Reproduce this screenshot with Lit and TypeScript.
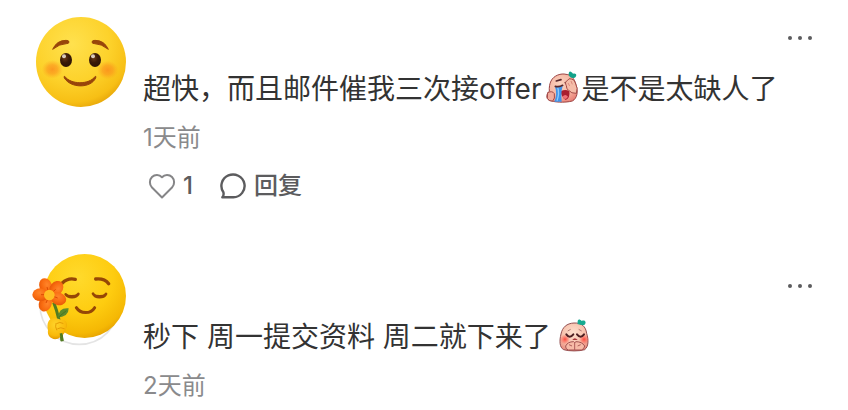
import { LitElement, html, svg, css, nothing } from "lit";
import { customElement, property } from "lit/decorators.js";

const smileAvatar = svg`
  <defs>
    <radialGradient id="face" cx="0.4" cy="0.3" r="0.76">
      <stop offset="0" stop-color="#ffe14e"/><stop offset="0.55" stop-color="#fdd22b"/>
      <stop offset="0.85" stop-color="#f7bf15"/><stop offset="1" stop-color="#e3a006"/>
    </radialGradient>
    <radialGradient id="blush">
      <stop offset="0" stop-color="#fb8a1c" stop-opacity="0.8"/>
      <stop offset="0.5" stop-color="#fb931c" stop-opacity="0.6"/>
      <stop offset="1" stop-color="#fba41c" stop-opacity="0"/>
    </radialGradient>
    <radialGradient id="eye" cx="0.4" cy="0.35" r="0.7">
      <stop offset="0" stop-color="#6b3a16"/><stop offset="0.5" stop-color="#3a1a08"/><stop offset="1" stop-color="#2c1204"/>
    </radialGradient>
  </defs>
  <circle cx="168" cy="171" r="135" fill="url(#face)"/>
  <ellipse cx="82" cy="193" rx="32" ry="28" fill="url(#blush)"/>
  <ellipse cx="248" cy="195" rx="32" ry="28" fill="url(#blush)"/>
  <g fill="#98450a" stroke="#98450a" stroke-width="3" stroke-linejoin="round">
    <path d="M83 133Q95 106 123 106Q132 106 132 111Q132 116 124 116Q104 116 83 133Z"/>
    <path d="M250 133Q238 106 210 106Q201 106 201 111Q201 116 209 116Q229 116 250 133Z"/>
    <path d="M119 214C137 239 192 240 211 214Q214 213 212 219C197 251 137 250 118 219Q116 213 119 214Z"/>
  </g>
  <ellipse cx="123" cy="165" rx="18" ry="21" fill="url(#eye)"/>
  <ellipse cx="210" cy="165" rx="18" ry="21" fill="url(#eye)"/>
  <circle cx="117" cy="154" r="6" fill="#d9cabd"/>
  <circle cx="204" cy="154" r="6" fill="#d9cabd"/>`;

const petals = [
  { x: 62, y: 123, turn: 68 },
  { x: 94, y: 130, turn: 130 },
  { x: 100, y: 161, turn: 18 },
  { x: 61, y: 176, turn: 115 },
  { x: 46, y: 149, turn: 0 },
];

const flowerAvatar = svg`
  <defs>
    <radialGradient id="face" cx="0.42" cy="0.28" r="0.78">
      <stop offset="0" stop-color="#ffda2c"/><stop offset="0.55" stop-color="#fecc10"/>
      <stop offset="0.85" stop-color="#f5b804"/><stop offset="1" stop-color="#df9900"/>
    </radialGradient>
    <radialGradient id="petal" cx="0.45" cy="0.35" r="0.65">
      <stop offset="0" stop-color="#ff852a"/><stop offset="0.6" stop-color="#f96c11"/><stop offset="1" stop-color="#e85a08"/>
    </radialGradient>
    <radialGradient id="hand" cx="0.4" cy="0.3" r="0.75">
      <stop offset="0" stop-color="#ffd32a"/><stop offset="0.7" stop-color="#f9b90a"/><stop offset="1" stop-color="#dc9000"/>
    </radialGradient>
  </defs>
  <circle cx="163" cy="180" r="118" fill="#fff" stroke="#e4e4e4" stroke-width="5"/>
  <ellipse cx="179" cy="153" rx="124" ry="126" fill="url(#face)"/>
  <g fill="none" stroke="#964706" stroke-linecap="round">
    <path d="M112 114Q128 98 151 103" stroke-width="10"/>
    <path d="M212 102Q238 99 251 116" stroke-width="10"/>
    <path d="M122 148C130 160 153 159 160 147" stroke-width="8"/>
    <path d="M204 146C211 160 235 160 243 147" stroke-width="8"/>
    <path d="M154 188C166 207 197 208 209 188" stroke-width="9"/>
  </g>
  <path d="M122 148Q141 153 160 147Q154 158 141 158Q128 158 122 148ZM204 146Q223 153 243 147Q236 158 223 158Q210 158 204 146Z" fill="#964706"/>
  <path d="M86 172Q105 218 111 288" fill="none" stroke="#517b22" stroke-width="9"/>
  <path d="M99 218Q101 187 131 190Q131 215 99 218Z" fill="#5e8b2c"/>
  <path d="M101 216Q113 206 124 197" fill="none" stroke="#3f681c" stroke-width="2"/>
  ${petals.map(({ x, y, turn }) => svg`<ellipse cx=${x} cy=${y} rx="24" ry="19" transform="rotate(${turn} ${x} ${y})" fill="url(#petal)"/>`)}
  <path d="M66 126L70 140M92 133L81 143M98 159L85 154M63 174L69 160M48 149L60 149" fill="none" stroke="#dc4c04" stroke-width="3"/>
  <circle cx="73" cy="150" r="16" fill="#ffbd22"/>
  <path d="M86 220C103 219 105 227 114 224C127 228 129 243 122 251C122 263 111 275 96 282C78 285 66 272 69 256C64 236 71 220 86 220Z" fill="url(#hand)"/>
  <path d="M96 235Q104 229 114 235M98 251Q107 245 118 251M93 235Q89 245 95 255" fill="none" stroke="#e59c04" stroke-width="3" stroke-linecap="round"/>
  <path d="M108 265L112 289" stroke="#517b22" stroke-width="8"/>`;

const cryingPeach = svg`
  <defs>
    <radialGradient id="peach" cx="0.45" cy="0.35" r="0.7">
      <stop offset="0" stop-color="#fbd3bf"/><stop offset="0.6" stop-color="#f5b5a2"/><stop offset="1" stop-color="#e98076"/>
    </radialGradient>
  </defs>
  <path d="M57 60C65 43 88 36 102 40C117 41 127 52 132 71C139 91 136 112 121 120C98 126 64 124 50 117C42 112 43 97 52 91C51 79 53 68 57 60Z" fill="url(#peach)" stroke="#9b4444" stroke-width="3"/>
  <path d="M110 42C110 26 118 32 123 38C134 34 136 45 128 50C120 54 113 48 110 42Z" fill="#12a28a"/>
  <path d="M86 91Q101 83 112 91Q115 111 101 117Q88 109 86 91Z" fill="#a91e2f"/>
  <path d="M91 107Q100 97 108 107Q103 115 98 114Z" fill="#ee7078"/>
  <path d="M69 77L92 75Q86 96 89 122L67 122Q77 99 69 77Z" fill="#3f93e8"/>
  <path d="M77 79Q83 97 75 119" fill="none" stroke="#8bcbff" stroke-width="4"/>
  <path d="M73 60L87 56M70 76Q82 79 92 73M100 65L108 68" fill="none" stroke="#59282c" stroke-width="5" stroke-linecap="round"/>
  <path d="M103 74Q97 63 106 59Q110 50 118 54Q127 54 130 66Q139 82 133 97Q118 98 110 88Q103 85 103 74Z" fill="#f5bda9" stroke="#a54c49" stroke-width="3"/>
  <path d="M108 66L113 75M117 60L121 70" stroke="#ca7167" stroke-width="2"/>
  <path d="M47 95Q61 88 67 98Q70 113 62 120Q52 122 46 112Z" fill="#f3ac9d" stroke="#a54c49" stroke-width="3"/>`;

const prayingPeach = svg`
  <defs>
    <radialGradient id="peach" cx="0.48" cy="0.35" r="0.7">
      <stop offset="0" stop-color="#fde0ce"/><stop offset="0.6" stop-color="#f7c0ab"/><stop offset="1" stop-color="#e98b7d"/>
    </radialGradient>
    <radialGradient id="cheek">
      <stop offset="0" stop-color="#ff493f"/><stop offset="1" stop-color="#ff5a4b" stop-opacity="0"/>
    </radialGradient>
  </defs>
  <path d="M75 36C99 35 110 47 113 67C119 87 119 107 107 116C91 121 60 121 44 116C31 109 31 89 36 69C40 49 53 37 75 36Z" fill="url(#peach)" stroke="#935052" stroke-width="3"/>
  <path d="M86 40C84 22 92 24 98 30C109 25 113 35 107 41C100 45 92 39 86 40Z" fill="#17aa91"/>
  <circle cx="48" cy="85" r="15" fill="url(#cheek)"/><circle cx="105" cy="85" r="15" fill="url(#cheek)"/>
  <path d="M52 70Q62 84 73 70M84 70Q95 84 105 70" fill="none" stroke="#4d1f22" stroke-width="6" stroke-linecap="round"/>
  <path d="M56 60L65 55M89 55L98 60" stroke="#945050" stroke-width="2"/>
  <path d="M70 87Q77 77 86 87Z" fill="#a73339"/>
  <path d="M50 105Q56 92 74 92L77 95L81 92Q99 92 107 105Q106 115 97 117H58Q48 114 50 105Z" fill="#f7baa7" stroke="#a35150" stroke-width="3"/>
  <path d="M77 94V117M60 101L69 105M95 101L86 105" stroke="#af5d59" stroke-width="3"/>`;

@customElement("comment-item")
class CommentItem extends LitElement {
  @property({ attribute: false }) avatar: unknown;
  @property({ attribute: false }) content: unknown;
  @property() viewbox = "0 0 270 270";
  @property() time = "";
  @property({ type: Number }) likes = 0;
  @property({ type: Boolean, reflect: true }) framed = false;

  static styles = css`
    :host { display: block; }
    .comment { display: flex; align-items: flex-start; gap: 17px; }
    .avatar { flex: none; width: 90px; height: 90px; overflow: visible; }
    .main { flex: 1; min-width: 0; }
    .head { display: flex; justify-content: flex-end; align-items: center; height: 42px; }
    :host([framed]) .head { height: 62px; }
    :host([framed]) .text { margin-top: 0; }
    button {
      display: flex; align-items: center; gap: 7px; padding: 0; border: 0;
      background: none; color: #5c5c5e; font: inherit; cursor: pointer;
    }
    .more svg { display: block; width: 26px; height: 16px; }
    .text { margin: 10px 0 0; font-size: 28px; line-height: 40px; color: #333; }
    .time { display: block; margin-top: 13px; font-size: 24px; line-height: 32px; color: #8a8a8c; }
    .actions { display: flex; gap: 26px; margin: 16px 0 0 5px; font-size: 24px; font-weight: 500; line-height: 32px; }
    .actions svg { width: 28px; height: 28px; fill: none; stroke: currentColor; stroke-linecap: round; stroke-linejoin: round; }
    .like svg { color: #858587; }
    .emoji { width: 36px; height: 36px; margin-left: 4px; vertical-align: -6px; }
  `;

  render() {
    return html`
      <article class="comment">
        <svg class="avatar" viewBox=${this.viewbox} aria-hidden="true">${this.avatar}</svg>
        <div class="main">
          <div class="head">
            <button class="more" aria-label="更多">
              <svg viewBox="0 0 26 16" fill="#5c5c5e"><circle cx="4" cy="8" r="2"/><circle cx="14" cy="8" r="2"/><circle cx="24" cy="8" r="2"/></svg>
            </button>
          </div>
          <p class="text">${this.content}</p>
          <time class="time">${this.time}</time>
          ${this.likes
            ? html`<div class="actions">
                <button class="like" aria-label="赞">
                  <svg viewBox="0 0 28 28" stroke-width="2"><path d="M14 25.5L4 15.5C1.2 12.5 1.2 7.8 4 5C6.8 2.2 11.3 2.3 14 5.2C16.7 2.3 21.2 2.2 24 5C26.8 7.8 26.8 12.5 24 15.5Z"/></svg>
                  <span>${this.likes}</span>
                </button>
                <button>
                  <svg viewBox="0 0 28 28" stroke-width="2.4"><path d="M4.4 20.3A11.6 11.4 0 1 1 14.4 25.3H3.3C4.5 24 4.9 22.3 4.4 20.3Z"/></svg>
                  <span>回复</span>
                </button>
              </div>`
            : nothing}
        </div>
      </article>`;
  }
}

@customElement("app-root")
class AppRoot extends LitElement {
  static styles = css`
    :host {
      display: block; box-sizing: border-box; padding: 17px 36px 0; background: #fff;
      font-family: Inter, "Noto Sans CJK SC", sans-serif;
    }
    .list { display: flex; flex-direction: column; gap: 53px; }
  `;

  render() {
    return html`
      <main class="list">
        <comment-item
          viewbox="33 36 270 270" .avatar=${smileAvatar} time="1天前" likes="1"
          .content=${html`超快，而且邮件催我三次接offer<svg class="emoji" viewBox="39 24 108 108" role="img" aria-label="哭">${cryingPeach}</svg>是不是太缺人了`}
        ></comment-item>
        <comment-item
          framed viewbox="33 30 270 270" .avatar=${flowerAvatar} time="2天前"
          .content=${html`秒下 周一提交资料 周二就下来了<svg class="emoji" viewBox="18 18 108 108" role="img" aria-label="祈祷">${prayingPeach}</svg>`}
        ></comment-item>
      </main>`;
  }
}
